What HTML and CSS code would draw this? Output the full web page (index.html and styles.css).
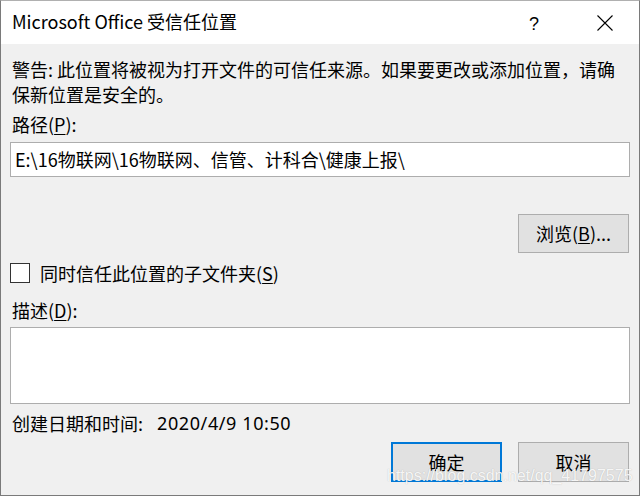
FILE: index.html
```html
<!DOCTYPE html>
<html lang="zh-CN">
<head>
<meta charset="utf-8">
<title>Microsoft Office 受信任位置</title>
<link rel="stylesheet" href="styles.css">
</head>
<body>
<div class="window">
  <div class="titlebar">
    <div class="title">Microsoft Office 受信任位置</div>
    <div class="help">?</div>
    <div class="close">
      <svg width="16" height="16" viewBox="0 0 16 16"><path d="M0.5 0.5 L15.5 15.5 M15.5 0.5 L0.5 15.5" stroke="#000" stroke-width="1.1" fill="none"/></svg>
    </div>
  </div>
  <div class="body">
    <p class="warning">警告: 此位置将被视为打开文件的可信任来源。如果要更改或添加位置，请确保新位置是安全的。</p>
    <div class="label label-path">路径(<u>P</u>):</div>
    <div class="input">E:\16物联网\16物联网、信管、计科合\健康上报\</div>
    <div class="browse-row">
      <div class="btn">浏览(<u>B</u>)...</div>
    </div>
    <div class="check-row">
      <span class="checkbox"></span>
      <span class="check-label">同时信任此位置的子文件夹(<u>S</u>)</span>
    </div>
    <div class="label label-desc">描述(<u>D</u>):</div>
    <div class="textarea"></div>
    <div class="date-row">
      <span class="date-label">创建日期和时间:</span>
      <span class="date-value">2020/4/9 10:50</span>
    </div>
    <div class="button-row">
      <div class="btn btn-default">确定</div>
      <div class="btn">取消</div>
    </div>
  </div>
  <div class="watermark">https://blog.csdn.net/qq_41797575</div>
</div>
</body>
</html>
```
FILE: styles.css
```css
* { box-sizing: border-box; }
html, body { margin: 0; padding: 0; }
body {
  width: 640px;
  height: 496px;
  overflow: hidden;
  font-family: "Noto Sans CJK SC", "Noto Sans", sans-serif;
  color: #000;
}
.window {
  position: relative;
  width: 640px;
  height: 496px;
  border: 1px solid #7a7a7a;
  border-top-color: #b0b0b0;
  background: #f0f0f0;
  display: flex;
  flex-direction: column;
}
.titlebar {
  height: 43px;
  background: #fff;
  display: flex;
  align-items: center;
  flex: none;
}
.title {
  font-size: 18px;
  line-height: 25px;
  padding-left: 11px;
  flex: 1;
  margin-top: -2px;
}
.help {
  font-family: "Liberation Sans", sans-serif;
  font-size: 18px;
  line-height: 20px;
  width: 10px;
  margin-right: 58px;
  margin-top: 2px;
}
.close {
  width: 16px;
  height: 16px;
  margin-right: 26px;
  margin-top: 1px;
  display: flex;
}
.body {
  flex: 1;
  padding: 13px 9px 0 9px;
  display: flex;
  flex-direction: column;
  font-size: 18px;
  line-height: 25px;
}
.warning {
  margin: 0;
  padding-left: 2px;
  padding-right: 6px;
}
.label { padding-left: 2px; }
.label-path { margin-top: 5px; }
u { text-decoration-thickness: 1px; text-underline-offset: 2px; }
.input {
  margin-top: 5px;
  height: 35px;
  background: #fff;
  border: 1px solid #adadad;
  padding: 4px 4px;
  white-space: nowrap;
}
.browse-row {
  display: flex;
  justify-content: flex-end;
  margin-top: 37px;
  padding-right: 1px;
}
.btn {
  width: 111px;
  height: 39px;
  border: 1px solid #adadad;
  background: #e1e1e1;
  display: flex;
  align-items: center;
  justify-content: center;
}
.check-row {
  margin-top: 10px;
  display: flex;
  align-items: center;
  height: 20px;
}
.checkbox {
  width: 20px;
  height: 20px;
  border: 1px solid #333;
  background: #fff;
  flex: none;
}
.check-label { margin-left: 10px; }
.label-desc { margin-top: 15px; }
.textarea {
  margin-top: 4px;
  height: 77px;
  background: #fff;
  border: 1px solid #adadad;
}
.date-row {
  margin-top: 7px;
  padding-left: 2px;
  display: flex;
}
.date-value {
  margin-left: 14px;
  letter-spacing: 0.6px;
  font-family: "Noto Sans", "Noto Sans CJK SC", sans-serif;
}
.button-row {
  margin-top: 6px;
  display: flex;
  justify-content: flex-end;
  gap: 16px;
  padding-right: 1px;
}
.button-row .btn { height: 40px; }
.btn-default { border: 2px solid #0078d7; }
.watermark {
  position: absolute;
  left: 386px;
  top: 465px;
  font-family: "Liberation Sans", sans-serif;
  font-size: 16px;
  line-height: 20px;
  color: rgba(255, 255, 255, 0.9);
  text-shadow: 0 0 1px rgba(110, 110, 110, 0.45);
  white-space: nowrap;
}
```
